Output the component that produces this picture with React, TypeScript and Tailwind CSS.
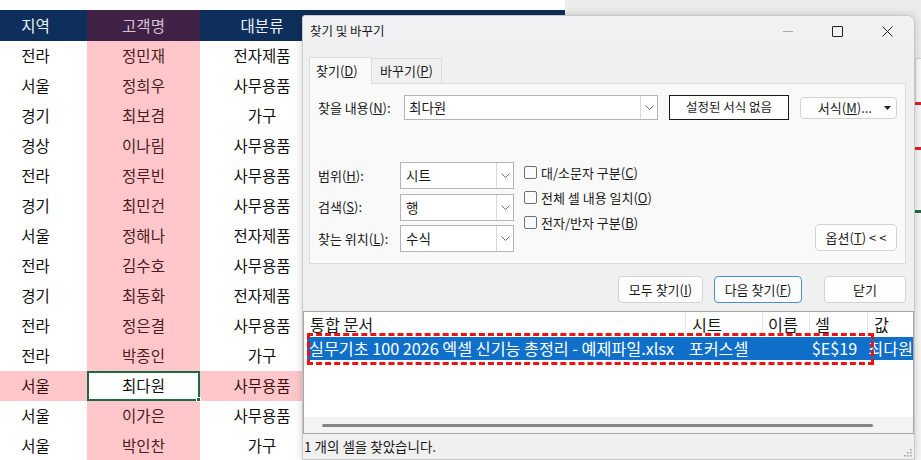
import React from "react";

const ROWS: [string, string, string][] = [
  ["전라", "정민재", "전자제품"],
  ["서울", "정희우", "사무용품"],
  ["경기", "최보겸", "가구"],
  ["경상", "이나림", "사무용품"],
  ["전라", "정루빈", "사무용품"],
  ["경기", "최민건", "사무용품"],
  ["서울", "정해나", "전자제품"],
  ["전라", "김수호", "사무용품"],
  ["경기", "최동화", "전자제품"],
  ["전라", "정은결", "사무용품"],
  ["전라", "박종인", "가구"],
  ["서울", "최다원", "사무용품"],
  ["서울", "이가은", "사무용품"],
  ["서울", "박인찬", "가구"],
];

const SELECTED = 11;

function Chevron() {
  return (
    <svg width="9" height="5" viewBox="0 0 9 5" className="text-[#6b6b6b]">
      <polyline points="0.5,0.5 4.5,4.5 8.5,0.5" fill="none" stroke="currentColor" strokeWidth="1" />
    </svg>
  );
}

function Select({ value }: { value: string }) {
  return (
    <div className="flex w-[114px] h-[27px] border border-[#b4b4b4] bg-white">
      <div className="flex-1 flex items-center pl-[5px] text-[13.5px]">{value}</div>
      <div className="w-[17px] flex items-center justify-center border-l border-[#dadada]">
        <Chevron />
      </div>
    </div>
  );
}

function Check({ children }: { children: React.ReactNode }) {
  return (
    <div className="flex items-center h-[25px] gap-[4px]">
      <div className="w-[13px] h-[13px] rounded-[2px] border border-[#6f6f6f] bg-[#fbfbfb]" />
      <span className="text-[13px]">{children}</span>
    </div>
  );
}

function Btn({ children, w, primary }: { children: React.ReactNode; w: string; primary?: boolean }) {
  return (
    <div
      className={`${w} h-[27px] flex items-center justify-center rounded-[4px] bg-[#fdfdfd] text-[13px] ${
        primary ? "border border-[#4a8fd6]" : "border border-[#d3d3d3]"
      }`}
    >
      {children}
    </div>
  );
}

function Sheet() {
  return (
    <div className="flex w-[921px] h-[460px]">
      <div className="w-[915px] flex flex-col">
        <div className="flex h-[10px] shrink-0">
          <div className="w-[565px] bg-white" />
          <div className="flex-1 bg-[#ececec]" />
        </div>
        <div className="flex h-[31px] shrink-0 text-[15.5px]">
          <div className="w-[87px] pr-[16px] bg-[#0e2f5b] text-[#eef2f7] flex items-center justify-center">지역</div>
          <div className="w-[113px] bg-[#3f2246] text-[#d7c3cf] flex items-center justify-center">고객명</div>
          <div className="w-[124px] bg-[#0e2f5b] text-[#eef2f7] flex items-center justify-center">대분류</div>
          <div className="w-[241px] bg-[#0e2f5b]" />
          <div className="flex-1 bg-[#ececec]" />
        </div>
        {ROWS.map((r, i) => {
          const sel = i === SELECTED;
          return (
            <div key={i} className="flex h-[30px] shrink-0 text-[15.5px]">
              <div
                className={`w-[87px] pr-[16px] flex items-center justify-center ${
                  sel ? "bg-[#ffc7c9] text-[#3d1010]" : "bg-white text-[#111]"
                }`}
              >
                {r[0]}
              </div>
              {sel ? (
                <div className="relative w-[113px] bg-white border-2 border-[#1e6b3e] flex items-center justify-center text-[#111]">
                  {r[1]}
                  <div className="absolute -right-[3px] -bottom-[3px] w-[5px] h-[5px] bg-[#1e6b3e] border border-white" />
                </div>
              ) : (
                <div className="w-[113px] bg-[#ffc7c9] text-[#4a1c1f] flex items-center justify-center">{r[1]}</div>
              )}
              <div
                className={`w-[124px] flex items-center justify-center ${
                  sel ? "bg-[#ffc7c9] text-[#3d1010]" : "bg-white text-[#111]"
                }`}
              >
                {r[2]}
              </div>
              <div className="flex-1 bg-white" />
            </div>
          );
        })}
      </div>
      <div className="w-[6px] flex flex-col bg-[#f6f6f6]">
        <div className="h-[58px] bg-[#ececec]" />
        <div className="h-[44px] border-t border-l border-[#d0d0d0] bg-[#f9f9f9]" />
        <div className="h-[3px] bg-[#e02020]" />
        <div className="h-[42px]" />
        <div className="h-[3px] bg-[#e02020]" />
        <div className="h-[60px]" />
        <div className="h-[3px] bg-[#1e6b3e]" />
      </div>
    </div>
  );
}

function Dialog() {
  return (
    <div className="absolute left-[302px] top-[15px] w-[613px] h-[445px] flex flex-col bg-[#f0f0f0] border border-[#c9c9c9] rounded-tr-[8px] rounded-tl-[3px] shadow-[0_0_8px_rgba(0,0,0,0.18)] text-[#1a1a1a] overflow-hidden">
      <div className="h-[30px] shrink-0 flex items-center bg-[#f1f1f4] pl-[7px]">
        <span className="text-[12.5px]">찾기 및 바꾸기</span>
        <div className="ml-auto flex items-center h-full">
          <div className="w-[48px] flex justify-center">
            <div className="w-[10px] h-px bg-[#a8a8a8]" />
          </div>
          <div className="w-[50px] flex justify-center">
            <div className="w-[11px] h-[11px] border border-[#222] rounded-[1px]" />
          </div>
          <div className="w-[50px] mr-[2px] flex justify-center">
            <svg width="11" height="11" viewBox="0 0 11 11">
              <path d="M0.5 0.5 L10.5 10.5 M10.5 0.5 L0.5 10.5" stroke="#222" strokeWidth="1" />
            </svg>
          </div>
        </div>
      </div>

      <div className="flex flex-col pl-[6px] pr-[8px]">
        <div className="flex items-end mt-[10px] h-[27px] text-[13px]">
          <div className="w-[63px] h-[27px] -mb-px z-10 pl-[6px] flex items-center bg-[#f9f9f9] border border-b-0 border-[#dcdcdc]">
            찾기(<u>D</u>)
          </div>
          <div className="w-[70px] h-[25px] pl-[8px] flex items-center bg-[#f0f0f0] border border-l-0 border-b-0 border-[#dcdcdc]">
            바꾸기(<u>P</u>)
          </div>
        </div>
        <div className="h-[181px] bg-[#f9f9f9] border border-[#dcdcdc] pl-[8px] pr-[8px] flex flex-col">
          <div className="flex items-center h-[25px] mt-[11px]">
            <div className="w-[86px] text-[13px] whitespace-nowrap">
              찾을 내용(<u>N</u>):
            </div>
            <div className="flex w-[254px] h-[25px] border border-[#b4b4b4] bg-white">
              <div className="flex-1 flex items-center pl-[4px] text-[13.5px]">최다원</div>
              <div className="w-[17px] flex items-center justify-center border-l border-[#dadada]">
                <Chevron />
              </div>
            </div>
            <div className="ml-[11px] w-[120px] h-[25px] border border-[#1a1a1a] bg-white flex items-center justify-center text-[12.5px]">
              설정된 서식 없음
            </div>
            <div className="ml-[11px] w-[97px] h-[22px] rounded-[4px] border border-[#d3d3d3] bg-[#fdfdfd] flex items-center justify-end pr-[5px] gap-[12px] text-[13px]">
              <span>
                서식(<u>M</u>)...
              </span>
              <svg width="7" height="4" viewBox="0 0 7 4">
                <path d="M0 0 L7 0 L3.5 4 Z" fill="#222" />
              </svg>
            </div>
          </div>

          <div className="flex mt-[42px]">
            <div className="flex flex-col gap-[4.5px]">
              {[
                ["범위", "H", "시트"],
                ["검색", "S", "행"],
                ["찾는 위치", "L", "수식"],
              ].map(([l, k, v]) => (
                <div key={k} className="flex items-center">
                  <div className="w-[82px] text-[13px] whitespace-nowrap">
                    {l}(<u>{k}</u>):
                  </div>
                  <Select value={v} />
                </div>
              ))}
            </div>
            <div className="ml-[10px] -mt-[2px] flex flex-col">
              <Check>
                대/소문자 구분(<u>C</u>)
              </Check>
              <Check>
                전체 셀 내용 일치(<u>O</u>)
              </Check>
              <Check>
                전자/반자 구분(<u>B</u>)
              </Check>
            </div>
            <div className="ml-auto self-end mb-[1px] w-[82px] h-[27px] rounded-[4px] border border-[#d3d3d3] bg-white flex items-center justify-center text-[13px]">
              옵션(<u>T</u>)&nbsp;&lt; &lt;
            </div>
          </div>
        </div>

        <div className="flex justify-end mt-[12px]">
          <Btn w="w-[85px]">
            모두 찾기(<u>I</u>)
          </Btn>
          <div className="w-[11px]" />
          <Btn w="w-[88px]" primary>
            다음 찾기(<u>F</u>)
          </Btn>
          <div className="w-[22px]" />
          <Btn w="w-[82px]">닫기</Btn>
        </div>
      </div>

      <div className="relative mt-[8px] h-[123px] shrink-0 border border-[#a6a6a6] bg-white flex flex-col text-[16.2px]">
        <div className="flex h-[25px] shrink-0 items-center">
          <div className="w-[382px] pl-[6px] h-full flex items-center border-r border-[#e6e6e6]">통합 문서</div>
          <div className="w-[77px] pl-[6px] h-full flex items-center border-r border-[#e6e6e6]">시트</div>
          <div className="w-[47px] pl-[5px] h-full flex items-center border-r border-[#e6e6e6]">이름</div>
          <div className="w-[58px] pl-[5px] h-full flex items-center border-r border-[#e6e6e6]">셀</div>
          <div className="flex-1 pl-[6px] h-full flex items-center">값</div>
        </div>
        <div className="flex h-[23px] shrink-0 items-center ml-[3px] bg-[#0f6fc9] text-white whitespace-nowrap overflow-hidden">
          <div className="w-[379px] pl-[2px]">실무기초 100 2026 엑셀 신기능 총정리 - 예제파일.xlsx</div>
          <div className="w-[77px] pl-[6px]">포커스셀</div>
          <div className="w-[47px]" />
          <div className="w-[58px] pl-[6px]">$E$19</div>
          <div className="flex-1 pl-[5px]">최다원</div>
        </div>
        <div className="flex-1" />
        <div className="h-[16px] shrink-0 bg-[#f3f3f3] flex items-center pl-[18px]">
          <div className="w-[551px] h-[3px] rounded-full bg-[#858585]" />
        </div>
        <div className="absolute left-[3px] top-[21px] w-[567px] h-[32px] border-[3px] border-dashed border-[#ee1111]" />
      </div>

      <div className="relative flex-1 flex items-center pl-[1px] text-[13.5px] bg-[#f0f0f0]">
        1 개의 셀을 찾았습니다.
        <svg className="absolute right-[2px] bottom-[2px]" width="9" height="9" viewBox="0 0 9 9">
          <rect x="7" y="1" width="1.5" height="1.5" fill="#9a9a9a" />
          <rect x="4" y="4" width="1.5" height="1.5" fill="#9a9a9a" />
          <rect x="7" y="4" width="1.5" height="1.5" fill="#9a9a9a" />
          <rect x="1" y="7" width="1.5" height="1.5" fill="#9a9a9a" />
          <rect x="4" y="7" width="1.5" height="1.5" fill="#9a9a9a" />
          <rect x="7" y="7" width="1.5" height="1.5" fill="#9a9a9a" />
        </svg>
      </div>
    </div>
  );
}

export default function App() {
  return (
    <div
      className="relative w-[921px] h-[460px] overflow-hidden bg-white"
      style={{ fontFamily: '"Noto Sans CJK KR", "Noto Sans", sans-serif' }}
    >
      <Sheet />
      <Dialog />
    </div>
  );
}
